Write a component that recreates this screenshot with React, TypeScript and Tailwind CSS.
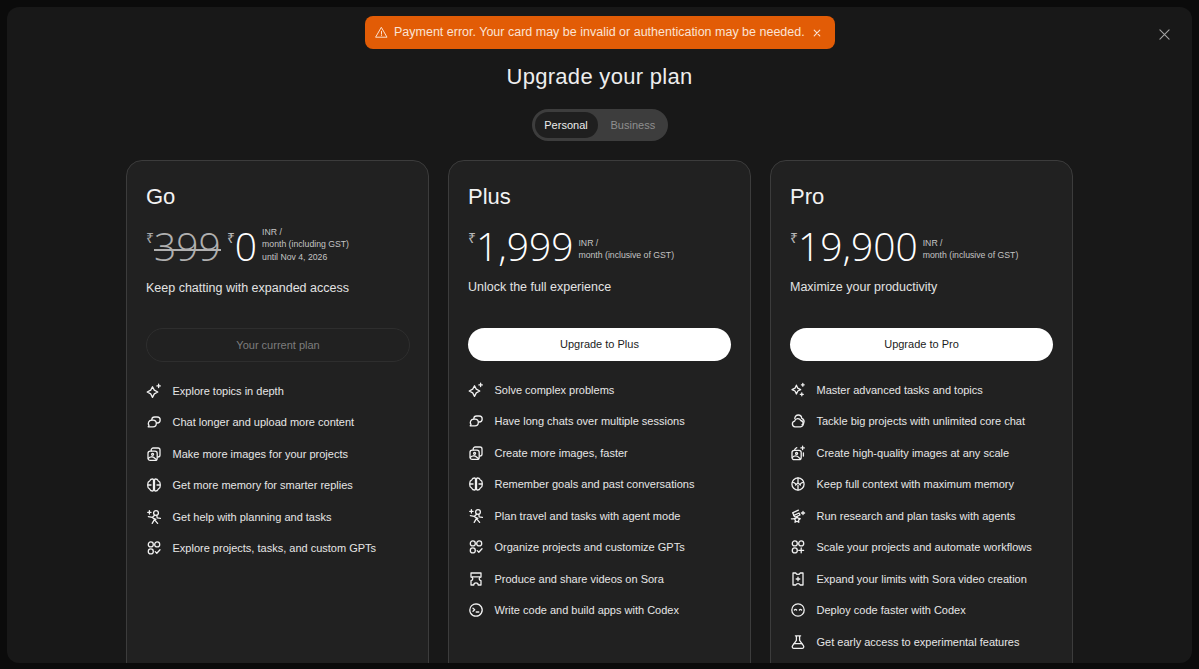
import { ReactNode } from "react";

const S = ({ children }: { children: ReactNode }) => (
  <svg
    viewBox="0 0 16 16"
    fill="none"
    stroke="currentColor"
    strokeWidth="1.3"
    strokeLinecap="round"
    strokeLinejoin="round"
    className="w-4 h-4 shrink-0 text-[#f0f0f0]"
  >
    {children}
  </svg>
);

const icons: Record<string, ReactNode> = {
  sparkle: (
    <>
      <path d="M6.500 3.800 8.300 7.100 11.800 9 8.300 10.900 6.500 14.400 4.700 10.900 1.200 9 4.700 7.100Z" />
      <path d="M12.600 1.200v3.400M10.900 2.900h3.400" />
    </>
  ),
  sparkles: (
    <>
      <path d="M6.400 3.200 7.800 6.200 10.600 7.600 7.800 9 6.400 12 5 9 2 7.600 5 6.200Z" />
      <path d="M12.800 1.400v2.800M11.400 2.800h2.800" />
      <path d="M11.800 10.800v3M10.300 12.300h3" />
    </>
  ),
  chat: (
    <>
      <path d="M5.600 6.200H7a3.300 3.300 0 0 1 0 6.600H2.200l.8-1.300a3.300 3.300 0 0 1 2.600-5.300Z" />
      <path d="M5.800 6v-.2A2.800 2.800 0 0 1 8.600 3h2.600a3 3 0 0 1 3 3 3 3 0 0 1-3 3h-.6" />
    </>
  ),
  cloud: (
    <>
      <path d="M5 13.800a2.900 2.900 0 0 1-.4-5.700 3.300 3.300 0 0 1 6.200-.6 3.200 3.200 0 0 1-.3 6.300Z" />
      <path d="M4.800 5.600a3.500 3.500 0 0 1 3.500-3.600c1.900 0 3.300 1.400 3.400 3.300 1.400.5 2.400 1.800 2.400 3.300 0 1.400-.8 2.600-2 3.100" />
    </>
  ),
  images: (
    <>
      <rect x="2" y="5.200" width="9.200" height="9.200" rx="2.200" />
      <path d="M5.200 5V4a2 2 0 0 1 2-2h4.800a2 2 0 0 1 2 2v5a2 2 0 0 1-2 2" />
      <circle cx="6.600" cy="8.300" r="1" />
      <path d="M2.400 12.200c1.700-1.800 4.400-2 6.400 0l1.600 1.400" />
    </>
  ),
  imagesPlus: (
    <>
      <rect x="2" y="5.400" width="9.200" height="9.200" rx="2.200" />
      <path d="M4.600 5.200c.2-1.200 1-2.100 2.200-2.500" />
      <circle cx="6.600" cy="8.400" r="1" />
      <path d="M2.400 12.400c1.700-1.800 4.400-2 6.400 0l1.600 1.400" />
      <path d="M12.600 1.200v3.400M10.900 2.900h3.400M13.400 7.800v3.200" />
    </>
  ),
  brain: (
    <>
      <path d="M6.600 2A3 3 0 0 0 3.800 3.800 3.200 3.200 0 0 0 1.800 7v2a3.200 3.200 0 0 0 2 3.200A3 3 0 0 0 6.600 14c.6 0 .9-.4.9-1V3c0-.6-.3-1-.9-1Z" />
      <path d="M9.400 2a3 3 0 0 1 2.800 1.800 3.200 3.200 0 0 1 2 3.200v2a3.200 3.200 0 0 1-2 3.200A3 3 0 0 1 9.400 14c-.6 0-.9-.4-.9-1V3c0-.6.3-1 .9-1Z" />
      <path d="M2 8h3M11 8h3" />
    </>
  ),
  brainFull: (
    <>
      <circle cx="8" cy="8" r="6.100" />
      <path d="M8 2v5l-2.400 2M8 7l2.400 2M8 9.500V14M2.400 6.400c1.400 0 2.400.4 3.200 1.400M13.600 6.400c-1.400 0-2.400.4-3.200 1.400" />
    </>
  ),
  agent: (
    <>
      <path d="M3.400 1.600v3.400M1.700 3.300h3.400" />
      <circle cx="10" cy="4" r="2.400" />
      <path d="M8.600 6.200 6.200 8.400 2.400 7.600M10.800 6.400l.4 2.400 3.200.6M7 9.200l2.800 1.200M6.200 14.400l2.200-3.800 3.200 3.800" />
    </>
  ),
  agentStar: (
    <>
      <path d="M13 3.400v3.200M11.400 5h3.200" />
      <path d="M8.400 2.200 2.600 4.800l1 1.800M9 5 3.600 7.600l1.800 1.600L10 7Z" />
      <path d="M7 8.600 8 10.200l2.200.5-1.600 1.400.2 2.200L7 13.200 5 14.300l.4-2.200-1.700-1.400 2.200-.4Z" />
      <path d="M1.400 10.800h1.500" />
    </>
  ),
  projects: (
    <>
      <circle cx="4.800" cy="4.400" r="2.500" />
      <circle cx="11.200" cy="4.400" r="2.500" />
      <circle cx="4.800" cy="11.400" r="2.500" />
      <path d="m9.200 11.600 1.600 1.700 3.200-3.500" />
    </>
  ),
  projectsPlus: (
    <>
      <circle cx="4.800" cy="4.400" r="2.500" />
      <circle cx="11.200" cy="4.400" r="2.500" />
      <circle cx="4.800" cy="11.400" r="2.500" />
      <path d="M11.200 9v4.800M8.800 11.400h4.800" />
    </>
  ),
  sora: (
    <>
      <path d="M3 2h10v4a1.800 1.800 0 0 0 0 3.600V14h-2.800a2.200 2.200 0 0 0-4.400 0H3V9.600A1.800 1.800 0 0 0 3 6Z" />
      <path d="M4.500 5.800h7" />
    </>
  ),
  soraPlus: (
    <>
      <path d="M3 2h2.800c.3 1 1.200 1.400 2.200 1.400S9.900 3 10.200 2H13v12h-2.800c-.3-1-1.200-1.400-2.200-1.400s-1.900.4-2.200 1.400H3Z" />
      <path d="M8 6.200v3.600M6.200 8h3.600" />
    </>
  ),
  codex: (
    <>
      <path d="M8 1.800a6.200 6.200 0 1 1-5.400 9.300c-.4-.7-.8-1.800-.8-3.100 0-3.400 2.800-6.200 6.200-6.200Z" />
      <path d="m5 6.300 1.700 1.500L5 9.300M8.200 10h2.600" />
    </>
  ),
  codexFace: (
    <>
      <circle cx="8" cy="8" r="6.200" />
      <path d="M4.400 8c.7-.8 1.500-.8 2.200 0M9.400 8c.7-.8 1.500-.8 2.200 0" />
    </>
  ),
  flask: (
    <>
      <path d="M5.400 1.800h5.200M6.400 1.800v4.600l-3.800 5.200c-.9 1.200 0 2.800 1.300 2.800h8.200c1.300 0 2.200-1.600 1.300-2.800L9.600 6.400V1.800" />
      <path d="M4.200 9.600h7.600" />
    </>
  ),
};

type Plan = {
  name: string;
  amount: string;
  unit: string[];
  tagline: string;
  cta: string;
  features: [string, string][];
};

const plans: Plan[] = [
  {
    name: "Go",
    amount: "0",
    unit: ["INR /", "month (including GST)", "until Nov 4, 2026"],
    tagline: "Keep chatting with expanded access",
    cta: "Your current plan",
    features: [
      ["sparkle", "Explore topics in depth"],
      ["chat", "Chat longer and upload more content"],
      ["images", "Make more images for your projects"],
      ["brain", "Get more memory for smarter replies"],
      ["agent", "Get help with planning and tasks"],
      ["projects", "Explore projects, tasks, and custom GPTs"],
    ],
  },
  {
    name: "Plus",
    amount: "1,999",
    unit: ["INR /", "month (inclusive of GST)"],
    tagline: "Unlock the full experience",
    cta: "Upgrade to Plus",
    features: [
      ["sparkle", "Solve complex problems"],
      ["chat", "Have long chats over multiple sessions"],
      ["images", "Create more images, faster"],
      ["brain", "Remember goals and past conversations"],
      ["agent", "Plan travel and tasks with agent mode"],
      ["projects", "Organize projects and customize GPTs"],
      ["sora", "Produce and share videos on Sora"],
      ["codex", "Write code and build apps with Codex"],
    ],
  },
  {
    name: "Pro",
    amount: "19,900",
    unit: ["INR /", "month (inclusive of GST)"],
    tagline: "Maximize your productivity",
    cta: "Upgrade to Pro",
    features: [
      ["sparkles", "Master advanced tasks and topics"],
      ["cloud", "Tackle big projects with unlimited core chat"],
      ["imagesPlus", "Create high-quality images at any scale"],
      ["brainFull", "Keep full context with maximum memory"],
      ["agentStar", "Run research and plan tasks with agents"],
      ["projectsPlus", "Scale your projects and automate workflows"],
      ["soraPlus", "Expand your limits with Sora video creation"],
      ["codexFace", "Deploy code faster with Codex"],
      ["flask", "Get early access to experimental features"],
    ],
  },
];

const Price = ({ plan }: { plan: Plan }) => {
  const isGo = plan.name === "Go";
  return (
    <div className="flex items-center h-[47px]">
      {isGo && (
        <>
          <span className="self-start mt-[8px] text-[14px] leading-[16px] text-[#a8a8a8]">₹</span>
          <span className="relative font-['Open_Sans'] font-light text-[39px] leading-[47px] text-[#b0b0b0] mr-[6px]">
            399
            <span className="absolute left-0 right-0 top-[27px] h-[1.5px] bg-[#b0b0b0]" />
          </span>
        </>
      )}
      <span className="self-start mt-[8px] text-[14px] leading-[16px] text-[#b8b8b8]">₹</span>
      <span className="font-['Open_Sans'] font-light text-[39px] leading-[47px] text-white">
        {plan.amount}
      </span>
      <div className={`${isGo ? "-mt-[2px]" : "mt-[7px]"} ml-[5px] text-[8.7px] leading-[12.5px] text-[#c4c4c4]`}>
        {plan.unit.map((line) => (
          <div key={line}>{line}</div>
        ))}
      </div>
    </div>
  );
};

const Card = ({ plan }: { plan: Plan }) => {
  const isCurrent = plan.name === "Go";
  return (
    <div className="w-[303px] h-[540px] shrink-0 rounded-2xl border border-[#3c3c3c] bg-[#212121] px-[19px] pt-[20px]">
      <h2 className="text-[22px] leading-[32px] font-normal text-[#f2f2f2]">{plan.name}</h2>
      <div className="mt-[9px]">
        <Price plan={plan} />
      </div>
      <p className={`${isCurrent ? "mt-[9px]" : "mt-[8px]"} text-[12.5px] leading-[20px] text-[#e3e3e3]`}>
        {plan.tagline}
      </p>
      <button
        className={
          isCurrent
            ? "mt-[30px] block w-[264px] h-[34px] rounded-full border border-[#2e2e2e] text-[11px] text-[#7d7d7d]"
            : "mt-[31px] block w-[263px] h-[33px] rounded-full bg-white text-[11px] text-[#1c1c1c]"
        }
      >
        {plan.cta}
      </button>
      <ul className="mt-[13px]">
        {plan.features.map(([icon, label]) => (
          <li key={label} className="flex items-center h-[31.5px] gap-[10.5px] text-[11px] text-[#e6e6e6]">
            <S>{icons[icon]}</S>
            <span>{label}</span>
          </li>
        ))}
      </ul>
    </div>
  );
};

export default function App() {
  return (
    <div className="h-screen w-full bg-[#0b0b0b] pt-[7px] pr-[7px] pb-[6px] pl-[7px] overflow-hidden font-['Liberation_Sans',sans-serif]">
      <div className="relative h-full rounded-xl bg-[#181818] overflow-hidden flex flex-col items-center">
        <div className="absolute top-[9px] left-[358px] w-[470px] h-[33px] rounded-lg bg-[#e25c06] flex items-center pl-[10px] text-[#fbe3d4] text-[12.5px]">
          <svg viewBox="0 0 16 16" fill="none" stroke="currentColor" strokeWidth="1.2" strokeLinejoin="round" strokeLinecap="round" className="w-[13px] h-[13px] shrink-0">
            <path d="M8 2 14.800 13.800H1.200Z" />
            <path d="M8 6.500v3.600M8 11.800v.1" />
          </svg>
          <span className="ml-[6px] whitespace-nowrap">Payment error. Your card may be invalid or authentication may be needed.</span>
          <svg viewBox="0 0 10 10" fill="none" stroke="currentColor" strokeWidth="1.400" strokeLinecap="round" className="w-[8px] h-[8px] ml-[8px] shrink-0">
            <path d="m1.500 1.500 7 7M8.500 1.500l-7 7" />
          </svg>
        </div>

        <button className="absolute top-[22px] right-[22px] text-[#a3a3a3]">
          <svg viewBox="0 0 12 12" fill="none" stroke="currentColor" strokeWidth="1.200" strokeLinecap="round" className="w-[11px] h-[11px] block">
            <path d="m1 1 10 10M11 1 1 11" />
          </svg>
        </button>

        <h1 className="mt-[54px] text-[22px] leading-[32px] font-normal tracking-[0.3px] text-[#ededed]">Upgrade your plan</h1>

        <div className="mt-[16px] h-[32px] w-[136px] rounded-full bg-[#3d3d3d] flex items-center p-[3px] text-[11px]">
          <span className="h-[26px] w-[63px] rounded-full bg-[#1f1f1f] flex items-center justify-center text-[#ececec]">Personal</span>
          <span className="ml-[13px] text-[#8f8f8f]">Business</span>
        </div>

        <div className="mt-[19px] flex gap-[19px]">
          {plans.map((plan) => (
            <Card key={plan.name} plan={plan} />
          ))}
        </div>
      </div>
    </div>
  );
}
